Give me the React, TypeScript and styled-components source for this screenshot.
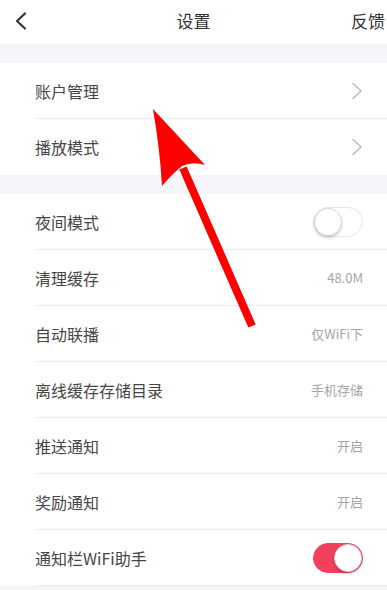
import React from 'react';
import styled, { createGlobalStyle } from 'styled-components';

const GlobalStyle = createGlobalStyle`
  html, body {
    margin: 0;
    padding: 0;
    background: #ffffff;
  }
  body {
    font-family: "Noto Sans CJK SC", "Noto Sans", sans-serif;
    -webkit-font-smoothing: antialiased;
  }
`;

const Page = styled.div`
  position: relative;
  width: 387px;
  height: 590px;
  overflow: hidden;
  background: #f6f5f9;
`;

const Header = styled.header`
  height: 44px;
  background: #ffffff;
  display: grid;
  grid-template-columns: 60px 1fr 60px;
  align-items: center;
`;

const BackBtn = styled.div`
  padding-left: 13px;
  padding-bottom: 3px;
  display: flex;
  align-items: center;
`;

const Title = styled.h1`
  margin: 0 0 3px;
  text-align: center;
  font-size: 17px;
  font-weight: 400;
  color: #333333;
`;

const Feedback = styled.span`
  justify-self: end;
  padding-right: 2px;
  margin-bottom: 3px;
  font-size: 17px;
  color: #333333;
`;

const Section = styled.section<{ $gap: number }>`
  margin-top: ${p => p.$gap}px;
  background: #ffffff;
`;

const Row = styled.div<{ $last?: boolean }>`
  box-sizing: border-box;
  height: 56px;
  margin-left: 35px;
  padding-right: 24px;
  display: flex;
  align-items: center;
  justify-content: space-between;
  border-bottom: 1px solid ${p => (p.$last ? 'transparent' : '#ededed')};
`;

const Label = styled.span`
  font-size: 16px;
  color: #464646;
`;

const Value = styled.span`
  font-size: 13px;
  color: #a6a6a6;
`;

const Switch = styled.div<{ $on?: boolean }>`
  box-sizing: border-box;
  width: 50px;
  height: 30px;
  border-radius: 15px;
  background: ${p => (p.$on ? '#f2415d' : '#ffffff')};
  border: 1px solid ${p => (p.$on ? '#f2415d' : '#e6e6e6')};
  display: flex;
  align-items: center;
  justify-content: ${p => (p.$on ? 'flex-end' : 'flex-start')};
`;

const Knob = styled.div`
  box-sizing: border-box;
  width: 28px;
  height: 28px;
  border-radius: 50%;
  background: #ffffff;
  border: 1px solid #d6d6d6;
  box-shadow: 0 2px 3px rgba(0, 0, 0, 0.18);
`;

const Overlay = styled.svg`
  position: absolute;
  left: 0;
  top: 0;
  pointer-events: none;
`;

const Chevron = () => (
  <svg width="12" height="18" viewBox="0 0 12 18">
    <path d="M2 1.5 L10 9 L2 16.5" fill="none" stroke="#bdbdbd" strokeWidth="1.6" strokeLinecap="round" strokeLinejoin="round" />
  </svg>
);

type Item = { label: string; value?: string; chevron?: boolean; toggle?: 'on' | 'off' };

const first: Item[] = [
  { label: '账户管理', chevron: true },
  { label: '播放模式', chevron: true },
];

const second: Item[] = [
  { label: '夜间模式', toggle: 'off' },
  { label: '清理缓存', value: '48.0M' },
  { label: '自动联播', value: '仅WiFi下' },
  { label: '离线缓存存储目录', value: '手机存储' },
  { label: '推送通知', value: '开启' },
  { label: '奖励通知', value: '开启' },
  { label: '通知栏WiFi助手', toggle: 'on' },
];

const renderRow = (item: Item, last?: boolean) => (
  <Row key={item.label} $last={last}>
    <Label>{item.label}</Label>
    {item.value && <Value>{item.value}</Value>}
    {item.chevron && <Chevron />}
    {item.toggle && (
      <Switch $on={item.toggle === 'on'}>
        <Knob />
      </Switch>
    )}
  </Row>
);

const App = () => {
  return (
    <Page>
      <GlobalStyle />
      <Header>
        <BackBtn>
          <svg width="16" height="20" viewBox="0 0 16 20">
            <path d="M12 2.5 L4 10 L12 17.5" fill="none" stroke="#333" strokeWidth="2.2" strokeLinecap="round" strokeLinejoin="round" />
          </svg>
        </BackBtn>
        <Title>设置</Title>
        <Feedback>反馈</Feedback>
      </Header>

      <Section $gap={19}>{first.map((it, i) => renderRow(it, i === first.length - 1))}</Section>

      <Section $gap={19}>{second.map(it => renderRow(it))}</Section>

      <Overlay width="387" height="590" viewBox="0 0 387 590">
        <line x1="183" y1="168" x2="252" y2="326" stroke="#ff0000" strokeWidth="8" />
        <path
          d="M153 109 L205 165 Q193 161 182 166 Q172 174 162 186 Q160 150 153 109 Z"
          fill="#ff0000"
        />
      </Overlay>
    </Page>
  );
};

export default App;
